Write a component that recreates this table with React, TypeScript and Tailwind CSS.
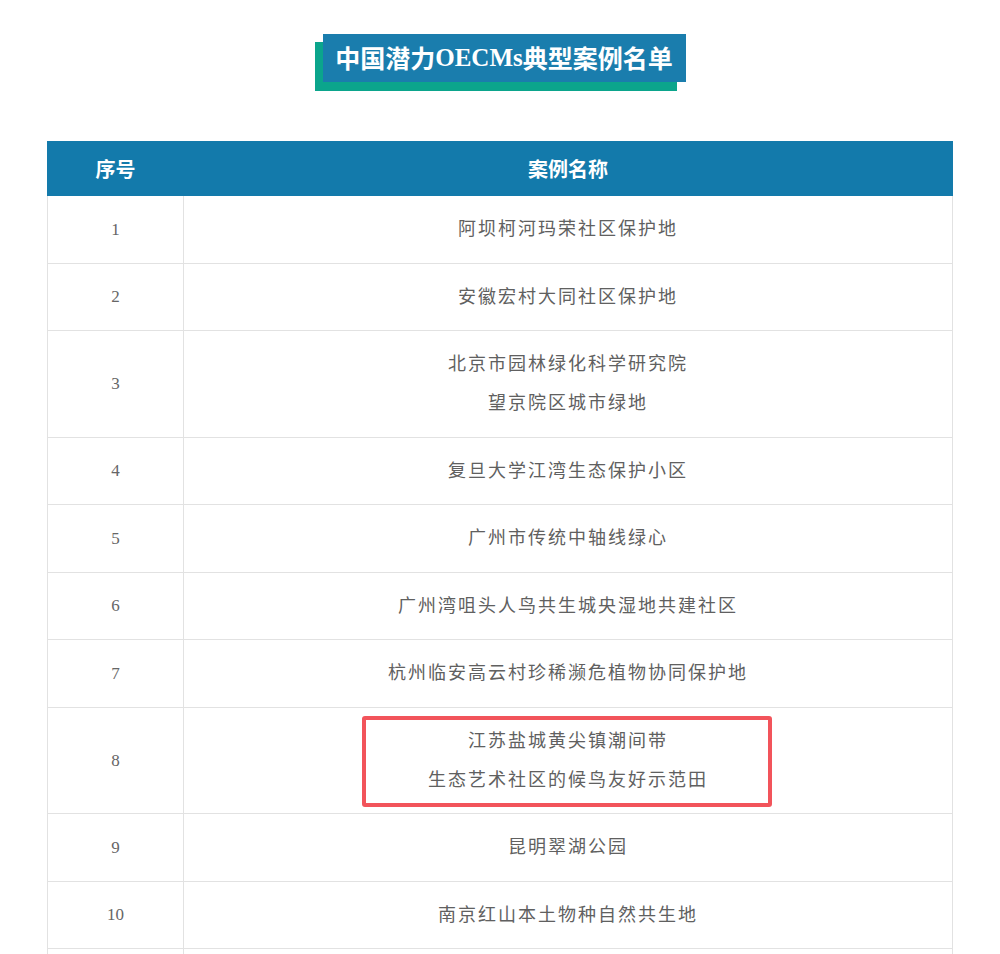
import React from "react";

type Row = { no: string; lines: string[]; highlight?: boolean };

const rows: Row[] = [
  { no: "1", lines: ["阿坝柯河玛荣社区保护地"] },
  { no: "2", lines: ["安徽宏村大同社区保护地"] },
  { no: "3", lines: ["北京市园林绿化科学研究院", "望京院区城市绿地"] },
  { no: "4", lines: ["复旦大学江湾生态保护小区"] },
  { no: "5", lines: ["广州市传统中轴线绿心"] },
  { no: "6", lines: ["广州湾咀头人鸟共生城央湿地共建社区"] },
  { no: "7", lines: ["杭州临安高云村珍稀濒危植物协同保护地"] },
  { no: "8", lines: ["江苏盐城黄尖镇潮间带", "生态艺术社区的候鸟友好示范田"], highlight: true },
  { no: "9", lines: ["昆明翠湖公园"] },
  { no: "10", lines: ["南京红山本土物种自然共生地"] },
  { no: "", lines: [""] },
];

const cjk = "font-['Noto_Sans_CJK_SC','Noto_Sans',sans-serif]";

export default function App() {
  return (
    <div className={`min-h-[954px] bg-white ${cjk}`}>
      {/* Title */}
      <div className="flex justify-center pt-[34px]">
        <div className="relative">
          <div className="absolute left-0 top-[8px] right-[9px] bottom-0 bg-[#0ba58c]"></div>
          <div className="relative ml-[8px] mb-[9px] w-[363px] h-[48px] bg-[#1a7dad] flex items-center justify-center text-[25px] font-bold text-white">
            中国潜力<span className="font-['Liberation_Serif',serif]">OECMs</span>典型案例名单
          </div>
        </div>
      </div>

      {/* Table */}
      <div className="flex justify-center pt-[50px]">
        <table className="w-[906px] border-collapse table-fixed">
          <thead>
            <tr className="bg-[#137aab] text-white text-[20px] font-bold">
              <th className="w-[136px] h-[54px] border border-[#137aab] font-bold">序号</th>
              <th className="h-[54px] border border-[#137aab] font-bold">案例名称</th>
            </tr>
          </thead>
          <tbody>
            {rows.map((r, i) => (
              <tr key={i}>
                <td className="border border-[#e2e2e2] text-center align-middle font-['Liberation_Serif',serif] text-[17px] text-[#666]">
                  {r.no}
                </td>
                <td className="relative border border-[#e2e2e2] text-center pt-[12px] pb-[15.5px] text-[18px] leading-[39px] tracking-[2px] text-[#606060]">
                  {r.lines.map((l, j) => (
                    <div key={j} className="min-h-[39px]">{l}</div>
                  ))}
                  {r.highlight && (
                    <div className="absolute left-[178px] top-[8px] w-[410px] h-[91px] border-[4px] border-[#f2545b] rounded-[3px] pointer-events-none"></div>
                  )}
                </td>
              </tr>
            ))}
          </tbody>
        </table>
      </div>
    </div>
  );
}
